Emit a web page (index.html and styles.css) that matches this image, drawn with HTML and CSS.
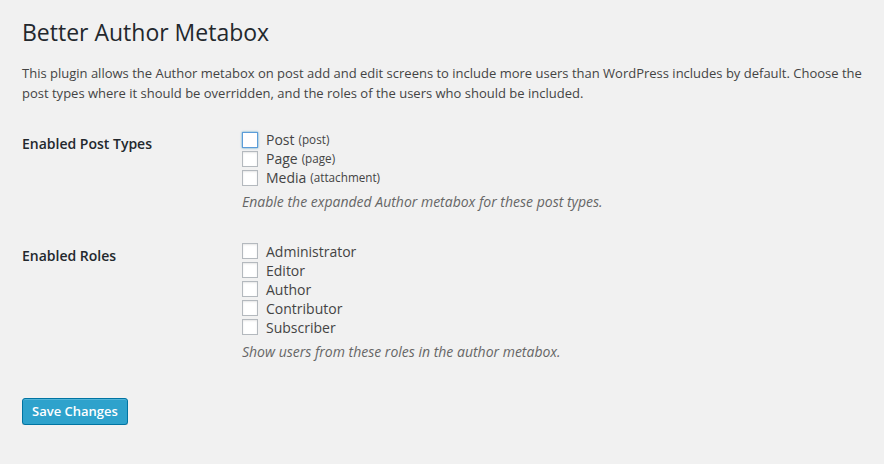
FILE: index.html
```html
<!DOCTYPE html>
<html>
<head>
<meta charset="utf-8">
<link rel="stylesheet" href="styles.css">
</head>
<body>
<div class="wrap">
  <h1 class="title">Better Author Metabox</h1>
  <p class="intro">This plugin allows the Author metabox on post add and edit screens to include more users than WordPress includes by default. Choose the post types where it should be overridden, and the roles of the users who should be included.</p>
  <div class="form-table">
    <div class="row">
      <div class="th">Enabled Post Types</div>
      <div class="td">
        <label class="opt"><span class="cb focus"></span>Post <small>(post)</small></label>
        <label class="opt"><span class="cb"></span>Page <small>(page)</small></label>
        <label class="opt"><span class="cb"></span>Media <small>(attachment)</small></label>
        <p class="description">Enable the expanded Author metabox for these post types.</p>
      </div>
    </div>
    <div class="row">
      <div class="th">Enabled Roles</div>
      <div class="td">
        <label class="opt"><span class="cb"></span>Administrator</label>
        <label class="opt"><span class="cb"></span>Editor</label>
        <label class="opt"><span class="cb"></span>Author</label>
        <label class="opt"><span class="cb"></span>Contributor</label>
        <label class="opt"><span class="cb"></span>Subscriber</label>
        <p class="description">Show users from these roles in the author metabox.</p>
      </div>
    </div>
  </div>
  <p class="submit"><button class="button-primary">Save Changes</button></p>
</div>
</body>
</html>
```
FILE: styles.css
```css
html, body {
  margin: 0;
  padding: 0;
  background: #f1f1f1;
}
body {
  font-family: "Open Sans", sans-serif;
  color: #444;
  font-size: 13px;
  line-height: 1.4em;
}
.wrap {
  padding: 0 20px 0 22px;
}
.title {
  margin: 0;
  padding: 18px 0 4px;
  font-size: 23px;
  font-weight: 400;
  line-height: 29px;
  color: #23282d;
}
.intro {
  margin: 13px 0 12px;
  font-size: 13px;
  line-height: 19.5px;
  color: #444;
}
.row {
  display: grid;
  grid-template-columns: 210px 1fr;
}
.th {
  padding: 20px 10px 20px 0;
  font-size: 14px;
  font-weight: 600;
  line-height: 18px;
  color: #23282d;
}
.td {
  padding: 15px 10px;
  font-size: 14px;
  line-height: 19px;
  color: #444;
}
.opt {
  display: flex;
  align-items: center;
  height: 19px;
}
.opt small {
  font-size: 11.7px;
  margin-left: 4px;
}
.cb {
  box-sizing: border-box;
  width: 16px;
  height: 16px;
  margin-right: 8px;
  border: 1px solid #b4b9be;
  background: #fff;
  box-shadow: inset 0 1px 2px rgba(0,0,0,.1);
  flex: none;
}
.cb.focus {
  border-color: #5b9dd9;
  box-shadow: 0 0 2px rgba(30,140,190,.8);
}
.description {
  margin: 5px 0 0;
  font-size: 14px;
  line-height: 19.5px;
  font-style: italic;
  color: #666;
}
.submit {
  margin: 0;
  padding: 22px 0 0;
}
.button-primary {
  font-family: "Open Sans", sans-serif;
  font-size: 13px;
  font-weight: 600;
  height: 27px;
  line-height: 25px;
  padding: 0 9px 1px;
  border-radius: 3px;
  border: 1px solid #0074a2;
  background: #2ea2cc;
  color: #fff;
  box-shadow: inset 0 1px 0 rgba(120,200,230,.5), 0 1px 0 rgba(0,0,0,.15);
}
```
